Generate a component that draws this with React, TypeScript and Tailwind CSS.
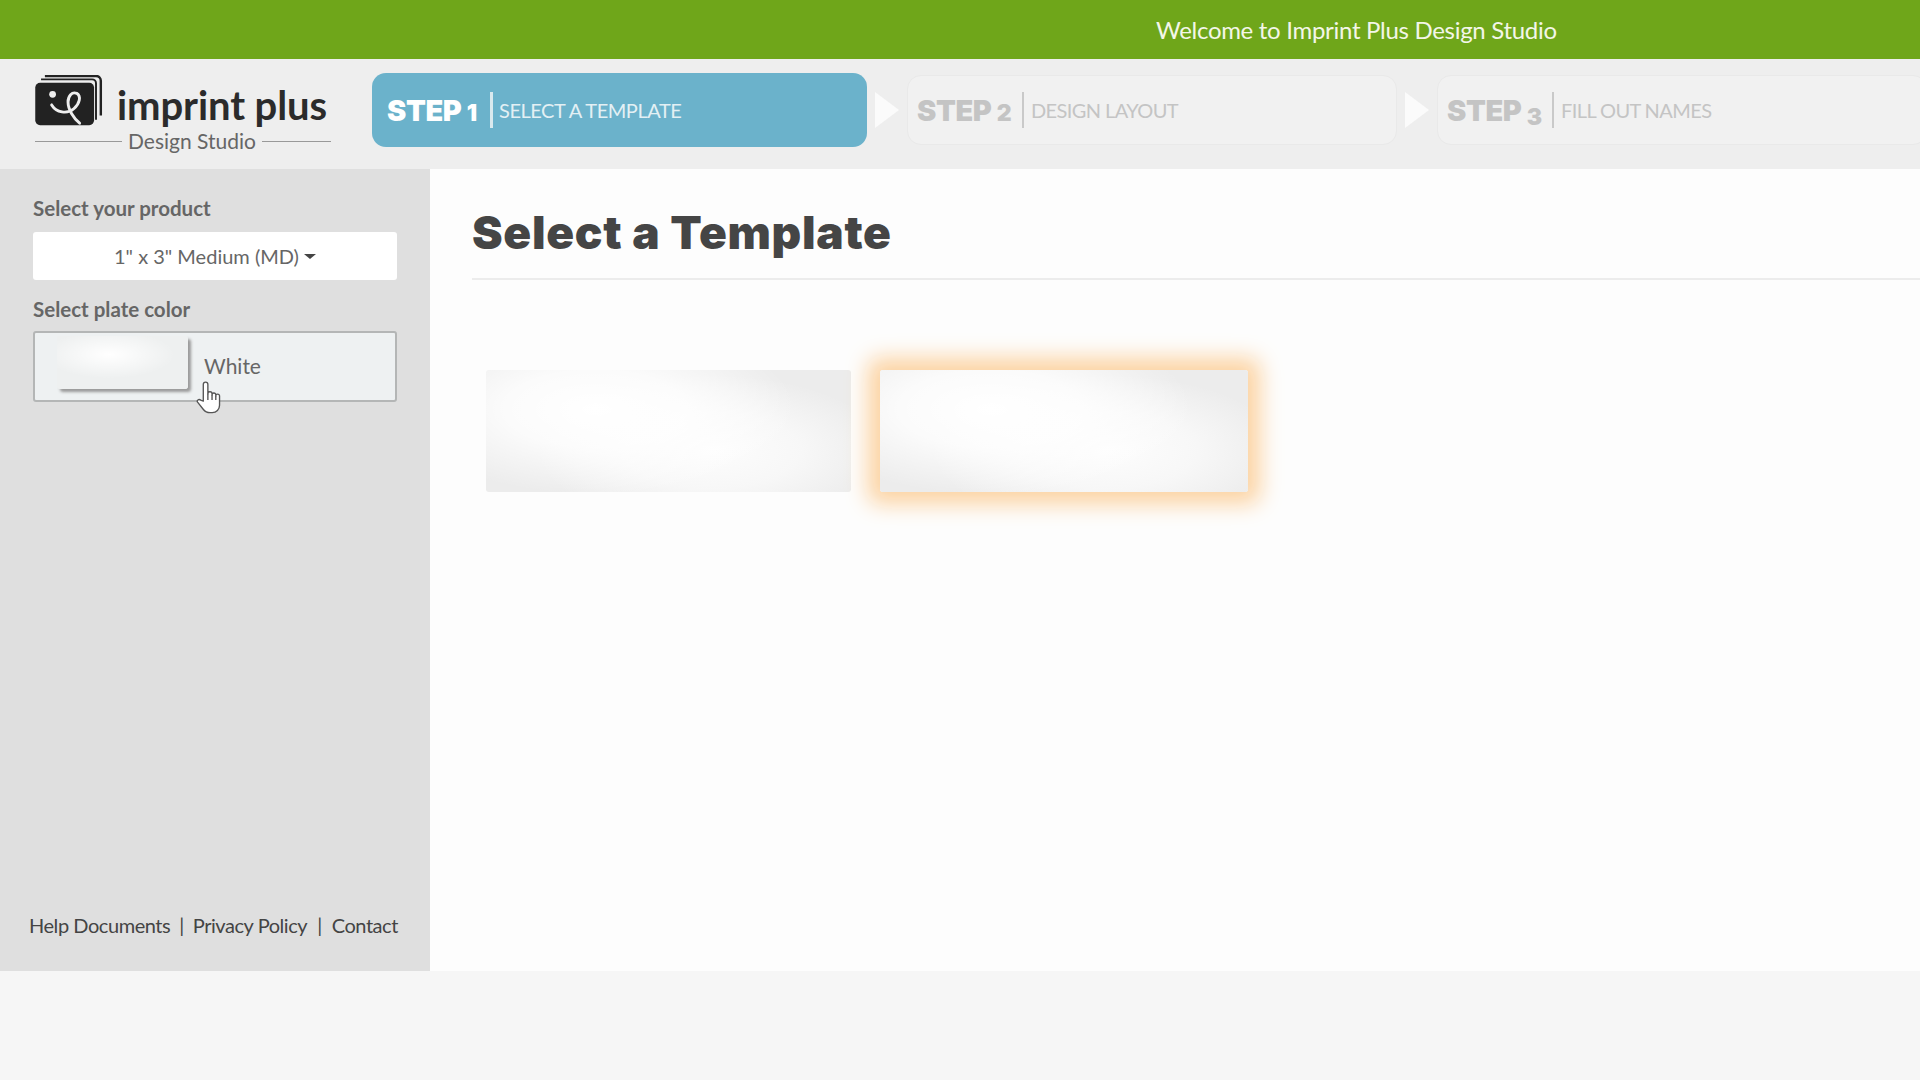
const SHEEN =
  "bg-[radial-gradient(ellipse_55%_70%_at_30%_32%,#ffffff_0%,#ffffffcc_45%,#ffffff00_100%),radial-gradient(ellipse_48%_62%_at_62%_66%,#fdfdfd_0%,#fdfdfdaa_50%,#fdfdfd00_100%),linear-gradient(#ececec,#ececec)]";

function Logo() {
  return (
    <div className="mt-[15px] w-[296px] shrink-0">
      <div className="flex h-[55px] items-center">
        <svg width="68" height="54" viewBox="0 0 70 56" className="shrink-0">
          <path d="M10 1h53a5 5 0 0 1 5 5v36" fill="none" stroke="#222" strokeWidth="2.5" />
          <path d="M6 4.500h53a4 4 0 0 1 4 4v38" fill="none" stroke="#222" strokeWidth="2" />
          <rect x="0" y="8" width="61" height="44" rx="5" fill="#222" />
          <circle cx="18" cy="20" r="3.500" fill="#eee" />
          <path
            d="M17 31c5 8 16 10 23 4 6-5 8-13 3-16-5-2-9 3-9 9 0 8 6 17 12 22"
            fill="none"
            stroke="#eee"
            strokeWidth="3"
            strokeLinecap="round"
          />
        </svg>
        <span className="mt-[6px] ml-[14px] text-[40px] leading-none font-bold tracking-[-0.1px] whitespace-nowrap text-[#2b2b2b]">
          imprint plus
        </span>
      </div>
      <div className="flex items-center gap-[6px]">
        <div className="h-[1px] w-[87px] bg-[#999]" />
        <span className="text-[21px] leading-[24px] text-[#666]">Design Studio</span>
        <div className="h-[1px] flex-1 bg-[#999]" />
      </div>
    </div>
  );
}

function Step({ num, label, active, low }: { num: string; label: string; active?: boolean; low?: boolean }) {
  return (
    <div
      className={
        active
          ? "flex h-[74px] w-[495px] shrink-0 items-center rounded-[14px] bg-[#6bb2cb] pl-[15px] text-white"
          : "flex h-[70px] w-[490px] shrink-0 items-center rounded-[14px] border border-[#e9e9e9] bg-[#f1f1f1] pl-[9px] text-[#c4c4c4]"
      }
    >
      <span className="w-[99px] font-['Inter',sans-serif] text-[29px] leading-none font-black tracking-[-0.4px] whitespace-nowrap">
        STEP{" "}
        <span className={low ? "relative top-[4px] text-[23px]" : "text-[23px]"}>{num}</span>
      </span>
      <div className={active ? "ml-[4px] h-[36px] w-[3px] bg-[#d9e9ee]" : "ml-[6px] h-[36px] w-[2px] bg-[#c9c9c9]"} />
      <span
        className={
          active
            ? "ml-[6px] text-[20px] tracking-[-0.45px] whitespace-nowrap text-[#e3f0f4]"
            : "ml-[7px] text-[20px] tracking-[-0.6px] whitespace-nowrap"
        }
      >
        {label}
      </span>
    </div>
  );
}

function Arrow() {
  return (
    <div className="mx-[8px] h-0 w-0 shrink-0 border-y-[18px] border-l-[24px] border-y-transparent border-l-[#fbfbfb]" />
  );
}

function HandCursor() {
  return (
    <svg
      width="25"
      height="35"
      viewBox="0 0 24 33"
      className="absolute top-[47px] left-[161px]"
      fill="#ffffff"
      stroke="#555555"
      strokeWidth="1.300"
      strokeLinejoin="round"
    >
      <path d="M7 20V4a2.200 2.200 0 0 1 4.400 0v9a2 2 0 0 1 4 0v1a1.800 1.800 0 0 1 3.600 0v1a1.800 1.800 0 0 1 3.600 0v9c0 4-3 7-7 7h-2c-3 0-5-1-6.500-3L1.500 21c-1-1.500 1-3.500 3-2z" />
      <path d="M11.400 13v6M15.400 14v5M19 15v4" fill="none" />
    </svg>
  );
}

export default function App() {
  return (
    <div className="flex h-[1080px] w-[1920px] flex-col overflow-hidden bg-[#f6f6f6] font-['Lato','Liberation_Sans',sans-serif]">
      <div className="flex h-[59px] shrink-0 items-center bg-[#6fa61a] pl-[1156px] text-[24px] tracking-[-0.3px] text-[#f3f6e8]">
        Welcome to Imprint Plus Design Studio
      </div>

      <div className="flex h-[110px] shrink-0 items-start overflow-hidden bg-[#eeeeee] pl-[35px]">
        <Logo />
        <div className="mt-[14px] ml-[41px] flex items-center">
          <Step num="1" label="SELECT A TEMPLATE" active />
          <Arrow />
          <Step num="2" label="DESIGN LAYOUT" />
          <Arrow />
          <Step num="3" label="FILL OUT NAMES" low />
        </div>
      </div>

      <div className="flex h-[802px] shrink-0">
        <aside className="flex w-[430px] shrink-0 flex-col justify-between bg-[#dfdfdf] px-[33px]">
          <div>
            <div className="mt-[27px] text-[20.5px] leading-[24px] font-bold text-[#666]">Select your product</div>
            <div className="mt-[12px] flex h-[48px] items-center justify-center rounded-[3px] bg-white text-[20px] text-[#666]">
              1" x 3" Medium (MD)
              <span className="ml-[5px] h-0 w-0 border-x-[6px] border-t-[5px] border-x-transparent border-t-[#444]" />
            </div>
            <div className="mt-[17px] text-[20.5px] leading-[24px] font-bold text-[#666]">Select plate color</div>
            <div className="relative mt-[10px] flex h-[71px] items-center rounded-[3px] border-2 border-[#b4b6b6] bg-[#eef1f2] pl-[22px]">
              <div className="mb-[8px] h-[53px] w-[131px] rounded-[3px] bg-[radial-gradient(ellipse_50%_45%_at_40%_35%,#ffffff_0%,#ffffff00_100%),linear-gradient(#eef0f0,#eef0f0)] shadow-[3px_3px_3px_#9a9a9a]" />
              <span className="mb-[2px] ml-[16px] text-[21px] text-[#666]">White</span>
              <HandCursor />
            </div>
          </div>
          <div className="mb-[31px] ml-[-4px] flex items-center text-[20px] tracking-[-0.45px] whitespace-nowrap text-[#444]">
            <span>Help Documents</span>
            <span className="mx-[9px]">|</span>
            <span>Privacy Policy</span>
            <span className="mx-[10px]">|</span>
            <span>Contact</span>
          </div>
        </aside>

        <main className="flex-1 bg-[#fdfdfd] pl-[42px]">
          <h1 className="mt-[34px] font-['Inter',sans-serif] text-[46px] leading-[58px] font-black tracking-[0.7px] text-[#454545]">
            Select a Template
          </h1>
          <div className="mt-[17px] h-[2px] bg-[#ececec]" />
          <div className="mt-[90px] ml-[14px] flex gap-[29px]">
            <div className={`h-[122px] w-[365px] rounded-[3px] ${SHEEN}`} />
            <div className={`h-[122px] w-[368px] rounded-[3px] shadow-[0_0_22px_12px_#fcd3a2] ${SHEEN}`} />
          </div>
        </main>
      </div>
    </div>
  );
}
